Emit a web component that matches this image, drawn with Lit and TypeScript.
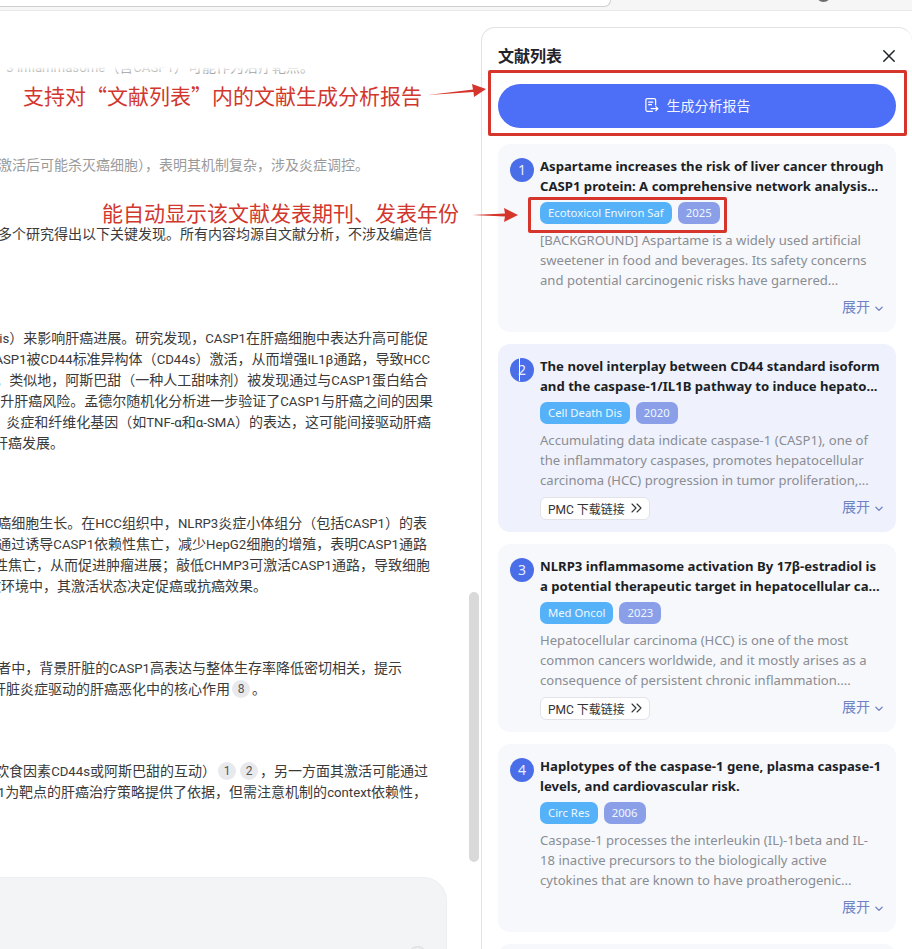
import { LitElement, html, css, svg } from "lit";
import { customElement } from "lit/decorators.js";

const LEFT_W = 481;

type Line = { end: number; parts: unknown[] };
type Para = { gap: number; tone?: string; lines: Line[] };

const chip = (n: number) => html`<span class="chip">${n}</span>`;

/* Latin runs in the article text are set slightly smaller than the CJK around them. */
const withLatin = (part: unknown) =>
  typeof part === "string"
    ? part
        .split(/([A-Za-z0-9αβ-]+(?: [a-z]+)?)/)
        .map((s, i) => (i % 2 ? html`<span class="lat">${s}</span>` : s))
    : part;

const paras: Para[] = [
  { gap: 46, tone: "faint", lines: [{ end: 314, parts: ["3 inflammasome（含CASP1）可能作为治疗靶点。"] }] },
  { gap: 77, tone: "muted", lines: [{ end: 369, parts: ["激活后可能杀灭癌细胞），表明其机制复杂，涉及炎症调控。"] }] },
  { gap: 48, lines: [{ end: 432, parts: ["多个研究得出以下关键发现。所有内容均源自文献分析，不涉及编造信"] }] },
  {
    gap: 83,
    lines: [
      { end: 428, parts: ["is）来影响肝癌进展。研究发现，CASP1在肝癌细胞中表达升高可能促"] },
      { end: 430, parts: ["CASP1被CD44标准异构体（CD44s）激活，从而增强IL1β通路，导致HCC"] },
      { end: 428, parts: ["。类似地，阿斯巴甜（一种人工甜味剂）被发现通过与CASP1蛋白结合"] },
      { end: 433, parts: ["升肝癌风险。孟德尔随机化分析进一步验证了CASP1与肝癌之间的因果"] },
      { end: 431, parts: ["炎症和纤维化基因（如TNF-α和α-SMA）的表达，这可能间接驱动肝癌"] },
      { end: 64, parts: ["肝癌发展。"] },
    ],
  },
  {
    gap: 59,
    lines: [
      { end: 427, parts: ["癌细胞生长。在HCC组织中，NLRP3炎症小体组分（包括CASP1）的表"] },
      { end: 427, parts: ["通过诱导CASP1依赖性焦亡，减少HepG2细胞的增殖，表明CASP1通路"] },
      { end: 430, parts: ["性焦亡，从而促进肿瘤进展；敲低CHMP3可激活CASP1通路，导致细胞"] },
      { end: 267, parts: ["微环境中，其激活状态决定促癌或抗癌效果。"] },
    ],
  },
  {
    gap: 61,
    lines: [
      { end: 402, parts: ["者中，背景肝脏的CASP1高表达与整体生存率降低密切相关，提示"] },
      { end: 266, parts: ["肝脏炎症驱动的肝癌恶化中的核心作用", chip(8), "。"] },
    ],
  },
  {
    gap: 61,
    lines: [
      { end: 428, parts: ["饮食因素CD44s或阿斯巴甜的互动）", chip(1), chip(2), "，另一方面其激活可能通过"] },
      { end: 427, parts: ["1为靶点的肝癌治疗策略提供了依据，但需注意机制的context依赖性，"] },
    ],
  },
];

type Ref = {
  title: string[];
  journal: string;
  year: string;
  body: string[];
  pmc?: boolean;
  active?: boolean;
};

const refs: Ref[] = [
  {
    title: ["Aspartame increases the risk of liver cancer through", "CASP1 protein: A comprehensive network analysis..."],
    journal: "Ecotoxicol Environ Saf",
    year: "2025",
    body: [
      "[BACKGROUND] Aspartame is a widely used artificial",
      "sweetener in food and beverages. Its safety concerns",
      "and potential carcinogenic risks have garnered...",
    ],
  },
  {
    title: ["The novel interplay between CD44 standard isoform", "and the caspase-1/IL1B pathway to induce hepato..."],
    journal: "Cell Death Dis",
    year: "2020",
    body: [
      "Accumulating data indicate caspase-1 (CASP1), one of",
      "the inflammatory caspases, promotes hepatocellular",
      "carcinoma (HCC) progression in tumor proliferation,...",
    ],
    pmc: true,
    active: true,
  },
  {
    title: ["NLRP3 inflammasome activation By 17β-estradiol is", "a potential therapeutic target in hepatocellular ca..."],
    journal: "Med Oncol",
    year: "2023",
    body: [
      "Hepatocellular carcinoma (HCC) is one of the most",
      "common cancers worldwide, and it mostly arises as a",
      "consequence of persistent chronic inflammation....",
    ],
    pmc: true,
  },
  {
    title: ["Haplotypes of the caspase-1 gene, plasma caspase-1", "levels, and cardiovascular risk."],
    journal: "Circ Res",
    year: "2006",
    body: [
      "Caspase-1 processes the interleukin (IL)-1beta and IL-",
      "18 inactive precursors to the biologically active",
      "cytokines that are known to have proatherogenic...",
    ],
  },
];

const docIcon = svg`<svg class="doc" viewBox="0 0 16 17" width="15" height="16" fill="none" stroke="#fff" stroke-width="1.3" stroke-linecap="round" stroke-linejoin="round"><path d="M9 15.2H3.6A1.6 1.6 0 0 1 2 13.6V3.2a1.6 1.6 0 0 1 1.6-1.6h7.2a1.6 1.6 0 0 1 1.6 1.6v5.2"/><path d="M5 5.4h4.4M5 8.2h3"/><path d="M7.6 12.4h7M12.6 10.2l2.2 2.2-2.2 2.2"/></svg>`;
const closeIcon = svg`<svg viewBox="0 0 12 12" width="12" height="12" fill="none" stroke="#1f2329" stroke-width="1.5" stroke-linecap="round"><path d="M.8.8l10.4 10.4M11.2.8L.8 11.2"/></svg>`;
const chevron = svg`<svg viewBox="0 0 9 6" width="8" height="6" fill="none" stroke="#6f82c6" stroke-width="1.4" stroke-linecap="round" stroke-linejoin="round"><path d="M1 1l3.5 3.6L8 1"/></svg>`;
const dblChevron = svg`<svg viewBox="0 0 11 10" width="11" height="10" fill="none" stroke="#333" stroke-width="1.1" stroke-linecap="round" stroke-linejoin="round"><path d="M1 1l4 4-4 4M6 1l4 4-4 4"/></svg>`;

@customElement("app-root")
export class AppRoot extends LitElement {
  static styles = css`
    :host {
      display: block;
      position: relative;
      width: 912px;
      height: 949px;
      overflow: hidden;
      background: #fff;
      font-family: "Noto Sans", "Noto Sans CJK SC", sans-serif;
    }
    .topbar {
      display: flex;
      height: 10px;
      box-sizing: content-box;
      background: #f6f6f6;
      border-bottom: 1px solid #e9e9e9;
      overflow: hidden;
    }
    .url {
      width: 610px;
      height: 6px;
      background: #fff;
      border-bottom: 1px solid #cfcfcf;
      border-right: 1px solid #cfcfcf;
      border-bottom-right-radius: 10px;
    }
    .avatar-clip {
      margin-left: 205px;
      height: 2px;
      width: 15px;
      overflow: hidden;
      display: flex;
      align-items: flex-end;
    }
    .avatar {
      flex: none;
      width: 15px;
      height: 15px;
      border-radius: 50%;
      background: #6d6d6d;
    }
    .main {
      display: flex;
      height: 938px;
    }
    .left {
      position: relative;
      flex: none;
      width: ${LEFT_W}px;
      overflow: hidden;
    }
    .para {
      display: flex;
      flex-direction: column;
      color: #3a3a3a;
      font-family: Roboto, "Noto Sans CJK SC", sans-serif;
      font-size: 14px;
      line-height: 21px;
    }
    .para.muted {
      color: #9a9a9a;
    }
    .para.faint {
      color: #a8a8a8;
    }
    .line {
      display: flex;
      justify-content: flex-end;
      white-space: nowrap;
      height: 21px;
      overflow: hidden;
    }
    .line > span {
      flex: none;
    }
    .lat {
      font-size: 13.2px;
    }
    .chip {
      display: inline-block;
      width: 18px;
      height: 18px;
      line-height: 18px;
      margin: 0 2px;
      border-radius: 50%;
      background: #e8e9ec;
      color: #555;
      font-size: 12px;
      text-align: center;
      vertical-align: 1px;
    }
    .fade {
      position: absolute;
      left: 0;
      right: 0;
      top: 0;
      height: 62px;
      background: linear-gradient(to bottom, #fff 90%, rgba(255, 255, 255, 0));
    }
    .scroll {
      position: absolute;
      left: 469px;
      top: 581px;
      width: 10px;
      height: 270px;
      border-radius: 5px;
      background: #d9d9d9;
    }
    .composer {
      position: relative;
      box-sizing: border-box;
      width: 447px;
      height: 100px;
      margin-top: 74px;
      background: #f3f4f6;
      border: 1px solid #eceef0;
      border-left: none;
      border-radius: 0 24px 0 0;
    }
    .send {
      position: absolute;
      left: 408px;
      top: 68px;
      width: 19px;
      height: 19px;
      border-radius: 50%;
      background: #ececee;
      border: 1px solid #dcdcdc;
      box-sizing: border-box;
    }
    .panel {
      flex: none;
      box-sizing: border-box;
      width: 431px;
      margin-top: 16px;
      height: 940px;
      padding: 0 16px 0 16px;
      background: #fff;
      border: 1px solid #e2e2e2;
      border-bottom: none;
      border-right: none;
      border-radius: 14px 14px 0 0;
      overflow: hidden;
    }
    .head {
      display: flex;
      align-items: center;
      justify-content: space-between;
      height: 24px;
      margin-top: 16px;
      padding-right: 1px;
    }
    .head h2 {
      margin: 0;
      font-size: 16px;
      font-weight: 700;
      color: #1f2329;
      line-height: 24px;
    }
    .gen {
      display: flex;
      align-items: center;
      justify-content: center;
      gap: 8px;
      box-sizing: border-box;
      height: 44px;
      width: 398px;
      margin-top: 16px;
      padding-bottom: 2px;
      border-radius: 22px;
      background: #4d6ef7;
      color: #f2f4ff;
      font-size: 14px;
    }
    .cards {
      display: flex;
      flex-direction: column;
      gap: 12px;
      margin-top: 16px;
      width: 398px;
    }
    .card {
      display: flex;
      gap: 6px;
      box-sizing: border-box;
      height: 188px;
      padding: 12px 12px 13px 12px;
      border-radius: 12px;
      background: #f7f8fc;
    }
    .card.active {
      background: #eff2fd;
    }
    .num {
      position: relative;
      flex: none;
      width: 24px;
      height: 24px;
      margin-top: 2px;
      border-radius: 50%;
      background: #4a6ee8;
      color: #e8edff;
      font-size: 14px;
      line-height: 24px;
      text-align: center;
    }
    .cursor {
      position: absolute;
      left: 9px;
      top: 0;
      width: 1px;
      height: 23px;
      background: #fff;
    }
    .content {
      flex: 1;
      min-width: 0;
    }
    .title {
      font-size: 13.15px;
      font-weight: 700;
      line-height: 20px;
      color: #1c1f26;
      white-space: nowrap;
    }
    .tags {
      display: flex;
      gap: 6px;
      margin-top: 6px;
    }
    .tag {
      height: 22px;
      padding: 0 8px;
      border-radius: 7px;
      color: #eef8ff;
      font-size: 11.3px;
      line-height: 22px;
      white-space: nowrap;
    }
    .tag.j {
      background: #55b1f8;
    }
    .tag.y {
      background: #8a9fe8;
    }
    .body {
      margin-top: 6px;
      color: #8a8d93;
      font-size: 13.1px;
      line-height: 20px;
      white-space: nowrap;
    }
    .foot {
      display: flex;
      align-items: center;
      justify-content: space-between;
      height: 22px;
      margin-top: 7px;
    }
    .pmc {
      display: flex;
      align-items: center;
      justify-content: space-between;
      box-sizing: border-box;
      height: 23px;
      width: 110px;
      padding: 0 7px;
      background: #fff;
      border: 1px solid #e2e3e8;
      border-radius: 6px;
      color: #333;
      font-family: Roboto, "Noto Sans CJK SC", sans-serif;
      font-size: 12px;
      white-space: nowrap;
    }
    .more {
      display: flex;
      align-items: center;
      gap: 5px;
      margin-left: auto;
      margin-right: 1px;
      color: #6f82c6;
      font-size: 14px;
      line-height: 20px;
      transform: translateY(-1px);
    }
    .more svg {
      margin-top: 3px;
    }
    .note {
      position: absolute;
      color: #d2372e;
      font-size: 21px;
      line-height: 28px;
      white-space: nowrap;
      font-family: "Noto Sans CJK SC", sans-serif;
    }
    .n1 {
      left: 23px;
      top: 81px;
    }
    .n2 {
      left: 102px;
      top: 198px;
    }
    .box {
      position: absolute;
      box-sizing: border-box;
      border: 3px solid #d6352c;
      border-radius: 2px;
    }
    .b1 {
      left: 488px;
      top: 70px;
      width: 419px;
      height: 66px;
    }
    .b2 {
      left: 528px;
      top: 197px;
      width: 199px;
      height: 36px;
    }
    .arrows {
      position: absolute;
      left: 0;
      top: 0;
      pointer-events: none;
    }
  `;

  private renderPara(p: Para) {
    return html`<div class="para ${p.tone ?? ""}" style="margin-top:${p.gap}px">
      ${p.lines.map(
        (l) =>
          html`<div class="line" style="padding-right:${LEFT_W - l.end}px"><span>${l.parts.map(withLatin)}</span></div>`
      )}
    </div>`;
  }

  private renderCard(r: Ref, i: number) {
    return html`<article class="card ${r.active ? "active" : ""}">
      <div class="num">${i + 1}${r.active ? html`<i class="cursor"></i>` : ""}</div>
      <div class="content">
        <div class="title">${r.title.map((t) => html`<div>${t}</div>`)}</div>
        <div class="tags">
          <span class="tag j">${r.journal}</span>
          <span class="tag y">${r.year}</span>
        </div>
        <div class="body">${r.body.map((t) => html`<div>${t}</div>`)}</div>
        <div class="foot">
          ${r.pmc ? html`<div class="pmc"><span>PMC 下载链接</span>${dblChevron}</div>` : ""}
          <div class="more">展开 ${chevron}</div>
        </div>
      </div>
    </article>`;
  }

  render() {
    return html`
      <div class="topbar">
        <div class="url"></div>
        <div class="avatar-clip"><div class="avatar"></div></div>
      </div>
      <div class="main">
        <section class="left">
          ${paras.map((p) => this.renderPara(p))}
          <div class="composer"><div class="send"></div></div>
          <div class="fade"></div>
          <div class="scroll"></div>
        </section>
        <aside class="panel">
          <div class="head"><h2>文献列表</h2>${closeIcon}</div>
          <div class="gen">${docIcon}<span>生成分析报告</span></div>
          <div class="cards">
            ${refs.map((r, i) => this.renderCard(r, i))}
            <article class="card"></article>
          </div>
        </aside>
      </div>
      <div class="note n1">支持对“文献列表”内的文献生成分析报告</div>
      <div class="note n2">能自动显示该文献发表期刊、发表年份</div>
      <div class="box b1"></div>
      <div class="box b2"></div>
      <svg class="arrows" width="912" height="949" viewBox="0 0 912 949">
        <polygon fill="#d6352c" points="428,95 473,89.5 472,84 486,89 474,97 473.5,92" />
        <polygon fill="#d6352c" points="472,215 505,213.5 504,208 518,215 504,222 505,216.5" />
      </svg>
    `;
  }
}
